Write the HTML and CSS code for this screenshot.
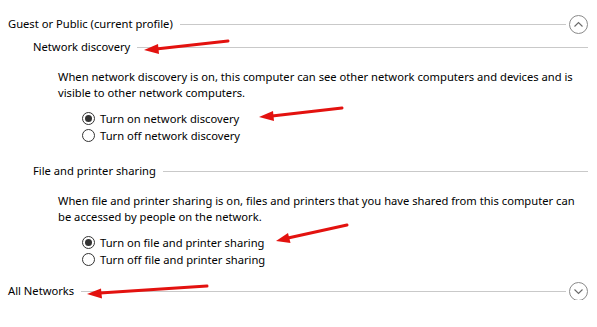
FILE: index.html
```html
<!DOCTYPE html>
<html lang="en">
<head>
    <meta charset="UTF-8">
    <title>Advanced sharing settings</title>
    <link rel="stylesheet" href="styles.css">
</head>
<body>

    <div class="profile">
        <div class="profile-head">
            <span class="profile-title">Guest or Public (current profile)</span>
            <span class="rule"></span>
            <span class="toggle">
                <svg width="19" height="19" viewBox="0 0 19 19"><circle cx="9.5" cy="9.5" r="9" fill="none" stroke="#8a8a8a"/><path d="M5.5 11.5 L9.5 7.5 L13.5 11.5" fill="none" stroke="#6a6a6a" stroke-width="1.1"/></svg>
            </span>
        </div>

        <div class="group">
            <div class="group-head">
                <span>Network discovery</span>
                <span class="rule"></span>
            </div>
            <p class="note">When network discovery is on, this computer can see other network computers and devices and is visible to other network computers.</p>
            <label class="option"><input type="radio" name="nd" checked> Turn on network discovery</label>
            <label class="option"><input type="radio" name="nd"> Turn off network discovery</label>
        </div>

        <div class="group">
            <div class="group-head">
                <span>File and printer sharing</span>
                <span class="rule"></span>
            </div>
            <p class="note">When file and printer sharing is on, files and printers that you have shared from this computer can be accessed by people on the network.</p>
            <label class="option"><input type="radio" name="fps" checked> Turn on file and printer sharing</label>
            <label class="option"><input type="radio" name="fps"> Turn off file and printer sharing</label>
        </div>
    </div>

    <div class="profile-head last">
        <span class="profile-title">All Networks</span>
        <span class="rule"></span>
        <span class="toggle">
            <svg width="19" height="19" viewBox="0 0 19 19"><circle cx="9.5" cy="9.5" r="9" fill="none" stroke="#8a8a8a"/><path d="M5.5 7.5 L9.5 11.5 L13.5 7.5" fill="none" stroke="#6a6a6a" stroke-width="1.1"/></svg>
        </span>
    </div>

    <!-- red annotation arrows drawn over the screenshot -->
    <svg class="marks" width="597" height="327" viewBox="0 0 597 327">
        <g stroke="#e3120f" stroke-width="3" stroke-linecap="round" fill="#e3120f">
            <line x1="228" y1="41" x2="156" y2="49"/>
            <polygon points="144,50 158,44 159,54" stroke="none"/>
            <line x1="342" y1="108" x2="272" y2="116"/>
            <polygon points="259,117 273,111 274,121" stroke="none"/>
            <line x1="347" y1="225" x2="288" y2="238"/>
            <polygon points="276,241 288,233 290.5,243" stroke="none"/>
            <line x1="207" y1="286" x2="100" y2="293"/>
            <polygon points="87,294 101,288.5 102,298.5" stroke="none"/>
        </g>
    </svg>

</body>
</html>
```

FILE: styles.css
```css
body {
    font-family: "Noto Sans", "Open Sans", sans-serif;
    font-size: 11.2px;
    color: #000;
    background: #fff;
    margin: 0;
    padding: 13px 9px 0 8px;
    width: 580px;
    position: relative;
}
.profile-head,
.group-head {
    display: flex;
    align-items: center;
    height: 20px;
}
.rule {
    flex: 1;
    height: 0;
    border-top: 1px solid #c9c9c9;
    margin: 2px 0 0 7px;
}
.toggle {
    display: flex;
    margin: 2px 0 0 3px;
}
.group {
    padding-left: 25px;
}
.group-head {
    margin-top: 3px;
}
.group + .group .group-head {
    margin-top: 16px;
}
.note {
    margin: 13px 4px 9px 25px;
    line-height: 16px;
}
.option {
    display: flex;
    align-items: center;
    height: 17px;
    margin-left: 49px;
}
.option input {
    appearance: none;
    width: 13px;
    height: 13px;
    margin: 0 5px 0 0;
    border: 1px solid #333;
    border-radius: 50%;
    display: grid;
    place-content: center;
}
.option input:checked::before {
    content: "";
    width: 7px;
    height: 7px;
    border-radius: 50%;
    background: #333;
}
.last {
    margin-top: 12px;
}
.marks {
    position: absolute;
    left: 0;
    top: 0;
    pointer-events: none;
}
```
